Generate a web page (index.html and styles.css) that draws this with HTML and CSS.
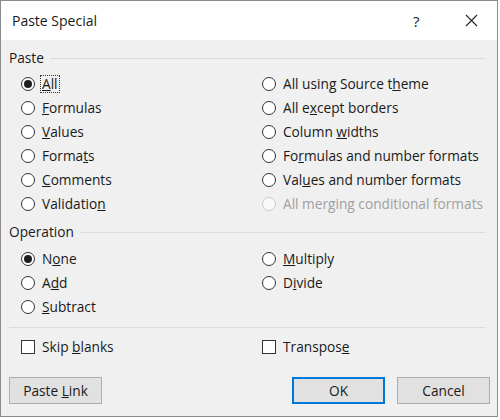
FILE: index.html
```html
<!DOCTYPE html>
<html>
<head>
<meta charset="utf-8">
<link rel="stylesheet" href="styles.css">
</head>
<body>
<div class="window">
  <div class="titlebar">
    <span class="title">Paste Special</span>
    <span class="help">?</span>
    <span class="close"><svg width="13" height="13" viewBox="0 0 13 13"><path d="M1 1 L12 12 M12 1 L1 12" stroke="#2b2b2b" stroke-width="1.2" fill="none"/></svg></span>
  </div>
  <div class="content">
    <div class="group-head"><span class="group-label">Paste</span><span class="group-line"></span></div>
    <div class="grid paste-grid">
      <div class="opt"><span class="radio checked"></span><span class="lbl focus"><u>A</u>ll</span></div>
      <div class="opt"><span class="radio"></span><span class="lbl">All using Source t<u>h</u>eme</span></div>
      <div class="opt"><span class="radio"></span><span class="lbl"><u>F</u>ormulas</span></div>
      <div class="opt"><span class="radio"></span><span class="lbl">All e<u>x</u>cept borders</span></div>
      <div class="opt"><span class="radio"></span><span class="lbl"><u>V</u>alues</span></div>
      <div class="opt"><span class="radio"></span><span class="lbl">Column <u>w</u>idths</span></div>
      <div class="opt"><span class="radio"></span><span class="lbl">Forma<u>t</u>s</span></div>
      <div class="opt"><span class="radio"></span><span class="lbl">Fo<u>r</u>mulas and number formats</span></div>
      <div class="opt"><span class="radio"></span><span class="lbl"><u>C</u>omments</span></div>
      <div class="opt"><span class="radio"></span><span class="lbl">Val<u>u</u>es and number formats</span></div>
      <div class="opt"><span class="radio"></span><span class="lbl">Validatio<u>n</u></span></div>
      <div class="opt disabled"><span class="radio"></span><span class="lbl">All merging conditional formats</span></div>
    </div>
    <div class="group-head op-head"><span class="group-label">Operation</span><span class="group-line"></span></div>
    <div class="grid op-grid">
      <div class="opt"><span class="radio checked"></span><span class="lbl">N<u>o</u>ne</span></div>
      <div class="opt"><span class="radio"></span><span class="lbl"><u>M</u>ultiply</span></div>
      <div class="opt"><span class="radio"></span><span class="lbl">A<u>d</u>d</span></div>
      <div class="opt"><span class="radio"></span><span class="lbl">D<u>i</u>vide</span></div>
      <div class="opt"><span class="radio"></span><span class="lbl"><u>S</u>ubtract</span></div>
    </div>
    <div class="separator"></div>
    <div class="grid check-grid">
      <div class="opt"><span class="checkbox"></span><span class="lbl">Skip <u>b</u>lanks</span></div>
      <div class="opt"><span class="checkbox"></span><span class="lbl">Transpos<u>e</u></span></div>
    </div>
    <div class="buttons">
      <button class="btn">Paste <u>L</u>ink</button>
      <span class="spacer"></span>
      <button class="btn default">OK</button>
      <button class="btn">Cancel</button>
    </div>
  </div>
</div>
</body>
</html>
```
FILE: styles.css
```css
html, body {
  margin: 0;
  padding: 0;
  background: #ffffff;
}
body {
  font-family: "Open Sans", "Noto Sans", "Liberation Sans", sans-serif;
  font-size: 13.7px;
  color: #1a1a1a;
}
.window {
  width: 496px;
  height: 415px;
  border: 1px solid #8c8c8c;
  display: flex;
  flex-direction: column;
  background: #f0f0f0;
}
.titlebar {
  height: 39px;
  background: #ffffff;
  display: flex;
  align-items: center;
  padding-left: 11px;
}
.title {
  font-size: 14px;
  flex: 1;
  color: #1a1a1a;
}
.help {
  font-size: 15px;
  width: 14px;
  margin-right: 38px;
  color: #222;
}
.close {
  display: flex;
  width: 13px;
  margin-right: 19px;
}
.content {
  flex: 1;
  display: flex;
  flex-direction: column;
  padding: 10px 8px 0 8px;
}
.group-head {
  display: flex;
  align-items: center;
  height: 16px;
}
.group-label {
  margin-right: 6px;
  line-height: 16px;
}
.group-line {
  flex: 1;
  height: 1px;
  background: #dadada;
  margin-right: 4px;
}
.grid {
  display: grid;
  grid-template-columns: 241px 1fr;
  padding-left: 12px;
}
.paste-grid {
  margin-top: 6px;
}
.op-head {
  margin-top: 8px;
}
.op-grid {
  margin-top: 7px;
}
.opt {
  height: 24px;
  display: flex;
  align-items: center;
}
.radio {
  width: 12px;
  height: 12px;
  border: 1px solid #333333;
  border-radius: 50%;
  background: #ffffff;
  margin-right: 7px;
  display: flex;
  align-items: center;
  justify-content: center;
  flex: none;
}
.radio.checked::after {
  content: "";
  width: 8px;
  height: 8px;
  border-radius: 50%;
  background: #1f1f1f;
}
.lbl {
  line-height: 16px;
  white-space: nowrap;
}
.focus {
  outline: 1px dotted #333;
  outline-offset: 0;
  padding: 0 1px;
  margin-left: -1px;
}
.disabled .radio {
  border-color: #cccccc;
  background: #f8f8f8;
}
.disabled .lbl {
  color: #a0a0a0;
}
.separator {
  height: 1px;
  background: #dadada;
  margin: 8px 4px 7px 0;
}
.checkbox {
  width: 12px;
  height: 12px;
  border: 1px solid #333333;
  background: #ffffff;
  margin-right: 7px;
  flex: none;
}
.buttons {
  display: flex;
  margin-top: 18px;
  margin-right: -1px;
}
.spacer {
  flex: 1;
}
.btn {
  width: 93px;
  height: 27px;
  background: #e1e1e1;
  border: 1px solid #adadad;
  font-family: inherit;
  font-size: 13.7px;
  color: #1a1a1a;
  padding: 0;
  margin: 0;
}
.btn.default {
  border: 2px solid #0078d7;
  margin-right: 12px;
}
```
